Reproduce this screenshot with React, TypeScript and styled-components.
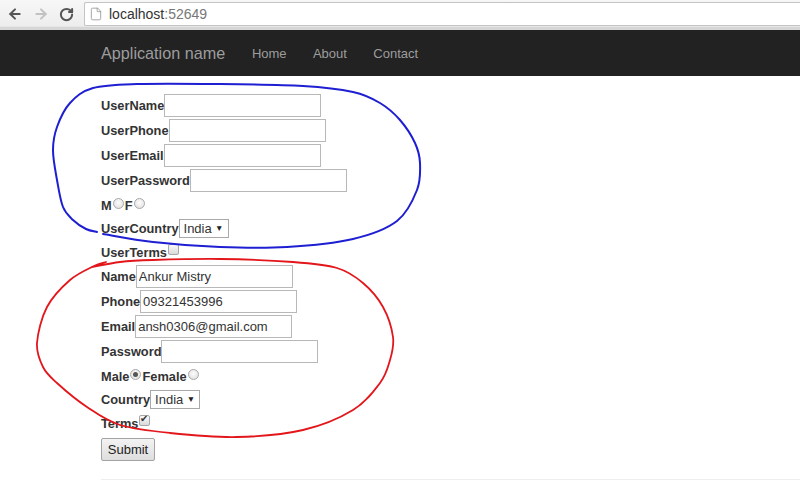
import React from 'react'
import styled, { createGlobalStyle } from 'styled-components'
import { ArrowLeft, ArrowRight, RotateCw, File } from 'lucide-react'

const GlobalStyle = createGlobalStyle`
  html, body {
    margin: 0;
    padding: 0;
    background: #fff;
  }
  body {
    font-family: "Liberation Sans", Arial, Helvetica, sans-serif;
    color: #333;
  }
`

const Page = styled.div`
  position: relative;
  width: 800px;
  height: 488px;
  overflow: hidden;
  background: #fff;
`

const BrowserBar = styled.div`
  height: 30px;
  display: flex;
  align-items: flex-start;
  padding-top: 2px;
  box-sizing: border-box;
  background: linear-gradient(#f7f7f7, #ededed);
  border-bottom: 3px solid #d6d6d6;
  box-shadow: inset 0 -1px 0 #e6e6e6;
`

const NavButtons = styled.div`
  width: 84px;
  height: 24px;
  display: flex;
  align-items: center;
  padding-left: 7px;
  gap: 10px;
  box-sizing: border-box;
`

const NavIcon = styled.span<{ $dim?: boolean }>`
  display: flex;
  color: ${(p) => (p.$dim ? '#c2c2c2' : '#555')};
`

const AddressBar = styled.div`
  flex: 1;
  height: 24px;
  box-sizing: border-box;
  background: #fff;
  border: 1px solid #c4c4c4;
  border-right: none;
  border-radius: 2px 0 0 2px;
  display: flex;
  align-items: center;
  padding-left: 4px;
  gap: 6px;
  font-size: 14px;
`

const Host = styled.span`
  color: #333;
`

const Port = styled.span`
  color: #777;
`

const Navbar = styled.div`
  height: 46px;
  background: #222;
  display: flex;
  align-items: center;
  padding-left: 101px;
`

const Brand = styled.span`
  font-size: 16.2px;
  color: #9d9d9d;
  margin-right: 13.5px;
`

const NavLink = styled.span`
  font-size: 13px;
  color: #9d9d9d;
  padding: 0 13.2px;
`

const Main = styled.div`
  padding: 17px 0 0 101px;
`

const Field = styled.div<{ $h: number }>`
  height: ${(p) => p.$h}px;
  display: flex;
  align-items: center;
`

const Label = styled.label`
  font-size: 12.8px;
  font-weight: bold;
  color: #333;
`

const TextInput = styled.input`
  width: 157px;
  height: 23px;
  box-sizing: border-box;
  border: 1px solid #b8b8b8;
  padding: 0 2px;
  margin: 0;
  font-family: "Liberation Sans", Arial, sans-serif;
  font-size: 13px;
  color: #333;
  outline: none;
`

const Radio = styled.input.attrs({ type: 'radio' })`
  appearance: none;
  width: 11px;
  height: 11px;
  margin: 0 1px 3px 1px;
  border-radius: 50%;
  border: 1px solid #a8a8a8;
  background: radial-gradient(circle at 50% 40%, #fdfdfd, #dcdcdc);
  box-sizing: border-box;
  position: relative;
  &:checked::after {
    content: '';
    position: absolute;
    left: 2px;
    top: 2px;
    width: 5px;
    height: 5px;
    border-radius: 50%;
    background: #555;
  }
`

const Checkbox = styled.input.attrs({ type: 'checkbox' })`
  appearance: none;
  width: 11px;
  height: 11px;
  margin: 0 0 5px 1px;
  border-radius: 2px;
  border: 1px solid #a8a8a8;
  background: linear-gradient(#fafafa, #dadada);
  box-sizing: border-box;
  position: relative;
  &:checked::after {
    content: '✔';
    position: absolute;
    left: 0px;
    top: -3px;
    font-size: 10px;
    color: #333;
  }
`

const SelectBox = styled.span`
  position: relative;
  display: inline-flex;
`

const Select = styled.select`
  appearance: none;
  width: 50px;
  height: 19px;
  box-sizing: border-box;
  border: 1px solid #a9a9a9;
  border-radius: 0;
  background: #fff;
  padding: 0 0 0 4px;
  margin: 0;
  font-family: "Liberation Sans", Arial, sans-serif;
  font-size: 13px;
  color: #333;
  outline: none;
`

const SelectArrow = styled.span`
  position: absolute;
  right: 5px;
  top: 4px;
  font-size: 8.5px;
  color: #222;
  pointer-events: none;
`

const SubmitButton = styled.button`
  margin-top: 3px;
  width: 54px;
  height: 23px;
  box-sizing: border-box;
  border: 1px solid #a3a3a3;
  border-radius: 2px;
  background: linear-gradient(#f3f3f3, #dedede);
  font-family: "Liberation Sans", Arial, sans-serif;
  font-size: 13px;
  color: #222;
  padding: 0;
`

const Rule = styled.hr`
  margin: 18px 0 0 0;
  border: none;
  border-top: 1px solid #eee;
`

const Scribbles = styled.svg`
  position: absolute;
  left: 0;
  top: 0;
  pointer-events: none;
`

type Pt = [number, number]

function smooth(pts: Pt[]): string {
  let d = `M${pts[0][0]},${pts[0][1]}`
  for (let i = 0; i < pts.length - 1; i++) {
    const p0 = pts[i - 1] || pts[i]
    const p1 = pts[i]
    const p2 = pts[i + 1]
    const p3 = pts[i + 2] || p2
    const c1x = p1[0] + (p2[0] - p0[0]) / 6
    const c1y = p1[1] + (p2[1] - p0[1]) / 6
    const c2x = p2[0] - (p3[0] - p1[0]) / 6
    const c2y = p2[1] - (p3[1] - p1[1]) / 6
    d += ` C${c1x.toFixed(1)},${c1y.toFixed(1)} ${c2x.toFixed(1)},${c2y.toFixed(1)} ${p2[0]},${p2[1]}`
  }
  return d
}

const bluePts: Pt[] = [
  [103, 234], [153, 242], [220, 247], [287, 247], [353, 239], [397, 221], [417, 190],
  [420, 163], [415, 143], [400, 120], [380, 103], [353, 92], [303, 86], [220, 84],
  [137, 84], [93, 88], [70, 103], [57, 127], [53, 150], [57, 180], [63, 207],
  [73, 220], [86, 229], [97, 232],
]

const redPts: Pt[] = [
  [92, 267], [120, 262], [153, 260], [220, 259], [293, 262], [337, 268], [363, 283],
  [383, 307], [393, 337], [390, 360], [380, 383], [353, 410], [303, 430], [237, 437],
  [170, 433], [120, 425], [87, 407], [57, 383], [43, 367], [37, 343], [47, 307],
  [70, 280], [94, 266], [106, 262],
]

export default function App() {
  return (
    <Page>
      <GlobalStyle />
      <BrowserBar>
        <NavButtons>
          <NavIcon><ArrowLeft size={16} strokeWidth={3} /></NavIcon>
          <NavIcon $dim><ArrowRight size={16} strokeWidth={3} /></NavIcon>
          <NavIcon><RotateCw size={15} strokeWidth={3.2} /></NavIcon>
        </NavButtons>
        <AddressBar>
          <NavIcon $dim><File size={14} strokeWidth={1.5} color="#999" /></NavIcon>
          <span>
            <Host>localhost</Host>
            <Port>:52649</Port>
          </span>
        </AddressBar>
      </BrowserBar>

      <Navbar>
        <Brand>Application name</Brand>
        <NavLink>Home</NavLink>
        <NavLink>About</NavLink>
        <NavLink>Contact</NavLink>
      </Navbar>

      <Main>
        <Field $h={25}><Label>UserName</Label><TextInput /></Field>
        <Field $h={25}><Label>UserPhone</Label><TextInput /></Field>
        <Field $h={25}><Label>UserEmail</Label><TextInput /></Field>
        <Field $h={25}><Label>UserPassword</Label><TextInput type="password" /></Field>
        <Field $h={24}>
          <Label>M</Label><Radio name="ug" />
          <Label>F</Label><Radio name="ug" />
        </Field>
        <Field $h={23}>
          <Label>UserCountry</Label>
          <SelectBox>
            <Select defaultValue="India"><option>India</option></Select>
            <SelectArrow>▼</SelectArrow>
          </SelectBox>
        </Field>
        <Field $h={24}><Label>UserTerms</Label><Checkbox /></Field>

        <Field $h={25}><Label>Name</Label><TextInput defaultValue="Ankur Mistry" /></Field>
        <Field $h={25}><Label>Phone</Label><TextInput defaultValue="09321453996" /></Field>
        <Field $h={25}><Label>Email</Label><TextInput defaultValue="ansh0306@gmail.com" /></Field>
        <Field $h={25}><Label>Password</Label><TextInput type="password" /></Field>
        <Field $h={24}>
          <Label>Male</Label><Radio name="g" defaultChecked />
          <Label>Female</Label><Radio name="g" />
        </Field>
        <Field $h={23}>
          <Label>Country</Label>
          <SelectBox>
            <Select defaultValue="India"><option>India</option></Select>
            <SelectArrow>▼</SelectArrow>
          </SelectBox>
        </Field>
        <Field $h={24}><Label>Terms</Label><Checkbox defaultChecked /></Field>

        <SubmitButton>Submit</SubmitButton>
        <Rule />
      </Main>

      <Scribbles width={800} height={488} viewBox="0 0 800 488">
        <path d={smooth(bluePts)} fill="none" stroke="#1e1ed2" strokeWidth={2} strokeLinecap="round" />
        <path d={smooth(redPts)} fill="none" stroke="#e3161b" strokeWidth={1.8} strokeLinecap="round" />
      </Scribbles>
    </Page>
  )
}
